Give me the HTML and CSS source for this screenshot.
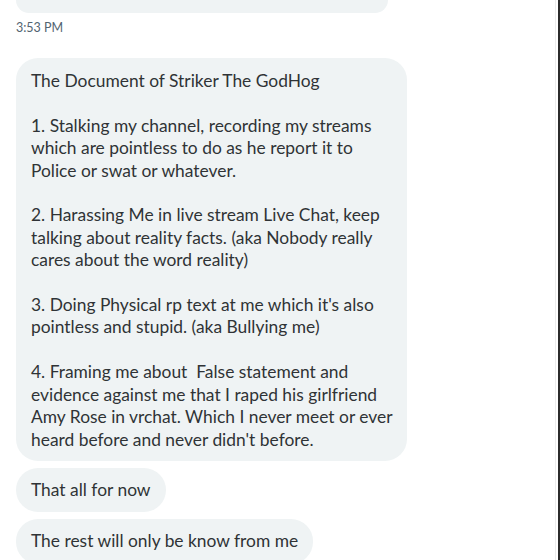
FILE: index.html
```html
<!DOCTYPE html>
<html lang="en">
<head>
    <meta charset="UTF-8">
    <meta name="viewport" content="width=device-width, initial-scale=1.0">
    <title>Messages</title>
    <link rel="stylesheet" href="styles.css">
</head>
<body>

    <div class="frame">
        <div class="conversation">
            <div class="bubble bubble-cut"></div>
            <div class="time">3:53 PM</div>

            <div class="bubble bubble-long">The Document of Striker The GodHog

1. Stalking my channel, recording my streams which are pointless to do as he report it to Police or swat or whatever.

2. Harassing Me in live stream Live Chat, keep talking about reality facts. (aka Nobody really cares about the word reality)

3. Doing Physical rp text at me which it's also pointless and stupid. (aka Bullying me)

4. Framing me about  False statement and evidence against me that I raped his girlfriend Amy Rose in vrchat. Which I never meet or ever heard before and never didn't before.</div>
            <div class="bubble">That all for now</div>
            <div class="bubble">The rest will only be know from me</div>
        </div>
    </div>

</body>
</html>
```

FILE: styles.css
```css
html, body {
    margin: 0;
    height: 100%;
    overflow: hidden;
    background: #fff;
}
body {
    font-family: Lato, "Liberation Sans", sans-serif;
    color: #2f3336;
}
.frame {
    height: 100%;
    border-right: 2px solid #2b2b2b;
    box-sizing: border-box;
}
.conversation {
    height: 100%;
    margin-right: 2px;
    border-right: 1px solid #ececec;
    display: flex;
    flex-direction: column;
    align-items: flex-start;
    gap: 7px;
    padding: 0 0 0 16px;
}
.conversation > * {
    flex-shrink: 0;
}
.bubble {
    background-color: #eff3f4;
    border-radius: 22px;
    padding: 11px 15px;
    font-size: 17.4px;
    line-height: 22.4px;
    white-space: pre-wrap;
}
.bubble-cut {
    width: 342px;
    height: 13px;
    padding: 0 15px;
    border-radius: 0 0 22px 22px;
}
.bubble-long {
    width: 364px;
    padding: 12px 12px 10px 15px;
}
.time {
    font-size: 12.5px;
    line-height: 15px;
    color: #536471;
    margin: 0 0 16px;
}
```
